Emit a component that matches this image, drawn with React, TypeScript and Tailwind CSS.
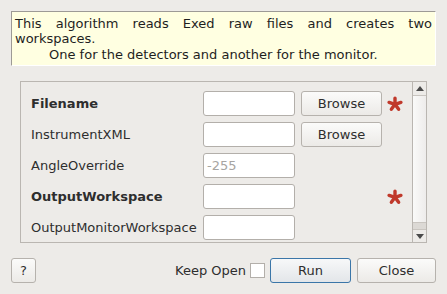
import React from "react";

const font = { fontFamily: '"DejaVu Sans", "Noto Sans", sans-serif' };

function Star() {
  const arms = [-90, -18, 54, 126, 198];
  return (
    <svg width="16" height="16" viewBox="0 0 16 16" className="block">
      {arms.map((a) => {
        const r = (a * Math.PI) / 180;
        const x = 8 + Math.cos(r) * 6.2;
        const y = 8.3 + Math.sin(r) * 6.2;
        return (
          <line
            key={a}
            x1="8"
            y1="8.3"
            x2={x}
            y2={y}
            stroke="#c0392b"
            strokeWidth="3.4"
            strokeLinecap="round"
          />
        );
      })}
    </svg>
  );
}

function Input({ placeholder }: { placeholder?: string }) {
  return (
    <div className="w-[92px] h-[25px] shrink-0 rounded-[3px] border border-[#b3afaa] bg-white flex items-center pl-[3px] text-[13px] text-[#a7a5a2]">
      {placeholder}
    </div>
  );
}

function Btn({ children, w, primary }: { children: React.ReactNode; w: string; primary?: boolean }) {
  return (
    <div
      className={
        "h-[25px] shrink-0 rounded-[3px] border flex items-center justify-center text-[13px] text-[#2e2e2e] " +
        w +
        (primary
          ? " border-[#3b76a8] bg-gradient-to-b from-[#f7f8f9] to-[#e3e6e9]"
          : " border-[#b6b2ad] bg-gradient-to-b from-[#fbfbfa] to-[#eceae7]")
      }
    >
      {children}
    </div>
  );
}

function Row({
  label,
  bold,
  browse,
  star,
  placeholder,
}: {
  label: string;
  bold?: boolean;
  browse?: boolean;
  star?: boolean;
  placeholder?: string;
}) {
  return (
    <div className="flex items-center h-[25px] shrink-0">
      <div className={"w-[172px] shrink-0 text-[13px] text-[#2e2e2e] whitespace-nowrap " + (bold ? "font-bold" : "")}>
        {label}
      </div>
      <Input placeholder={placeholder} />
      {browse ? (
        <div className="ml-[6px]">
          <Btn w="w-[81px]">Browse</Btn>
        </div>
      ) : (
        <div className="ml-[6px] w-[81px] shrink-0" />
      )}
      <div className="ml-[5px] w-[16px] shrink-0">{star ? <Star /> : null}</div>
    </div>
  );
}

export default function App() {
  return (
    <div className="w-[447px] h-[294px] bg-[#edebe8] flex flex-col px-[11px] pt-[11px] overflow-hidden" style={font}>
      <div className="h-[55px] shrink-0 bg-[#ffffe1] border-t border-l border-[#9d9a96] border-r border-b border-r-white border-b-white pl-[3px] pr-[3px] pt-[4px] text-[13px] leading-[15px] text-[#1e1e1e]">
        <div className="text-justify">
          This algorithm reads Exed raw files and creates two workspaces.
        </div>
        <div className="pl-[34px] mt-[1px]">One for the detectors and another for the monitor.</div>
      </div>
      <div className="mt-[15px] mx-[9px] h-[162px] shrink-0 border border-[#bab6b1] flex">
        <div className="flex-1 pt-[9px] pl-[10px] flex flex-col gap-[6px] overflow-hidden">
          <Row label="Filename" bold browse star />
          <Row label="InstrumentXML" browse />
          <Row label="AngleOverride" placeholder="-255" />
          <Row label="OutputWorkspace" bold star />
          <Row label="OutputMonitorWorkspace" />
        </div>
        <div className="w-[14px] shrink-0 border-l border-[#bab6b1] flex flex-col">
          <div className="h-[14px] border-b border-[#c9c5c0] flex items-center justify-center">
            <svg width="8" height="5" viewBox="0 0 8 5"><polygon points="0,5 8,5 4,0" fill="#4a4a4a" /></svg>
          </div>
          <div className="flex-1 bg-gradient-to-r from-[#fafaf9] to-[#eeeceb]" />
          <div className="h-[7px] bg-[#dcd9d5] border-t border-[#c9c5c0]" />
          <div className="h-[13px] border-t border-[#c9c5c0] flex items-center justify-center">
            <svg width="8" height="5" viewBox="0 0 8 5"><polygon points="0,0 8,0 4,5" fill="#4a4a4a" /></svg>
          </div>
        </div>
      </div>
      <div className="mt-[15px] flex items-center h-[25px]">
        <Btn w="w-[25px]">?</Btn>
        <div className="flex-1" />
        <div className="text-[13px] text-[#2e2e2e]">Keep Open</div>
        <div className="ml-[4px] w-[15px] h-[15px] border border-[#b3afaa] bg-white" />
        <div className="ml-[5px]">
          <Btn w="w-[81px]" primary>Run</Btn>
        </div>
        <div className="ml-[6px]">
          <Btn w="w-[79px]">Close</Btn>
        </div>
      </div>
    </div>
  );
}
